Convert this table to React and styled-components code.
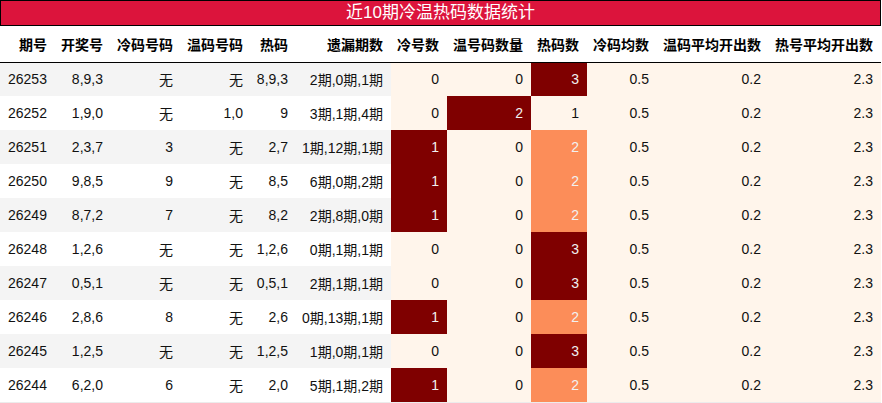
import React from "react";
import styled, { createGlobalStyle } from "styled-components";

const Global = createGlobalStyle`
  html, body { margin: 0; padding: 0; background: #ffffff; }
  body { font-family: "Liberation Sans", "Noto Sans CJK SC", sans-serif; }
`;

const Wrap = styled.div`
  width: 881px;
`;

const Title = styled.div`
  height: 24px;
  border: 1px solid #000;
  background: #dc143c;
  color: #fff;
  font-size: 17px;
  line-height: 24px;
  text-align: center;
`;

const Table = styled.table`
  width: 881px;
  border-collapse: collapse;
  table-layout: fixed;
  font-size: 14px;
  color: #111;
  border-bottom: 1px solid #ececec;
`;

const HeadRow = styled.tr`
  height: 36px;
  border-bottom: 1px solid #000;
`;

const HeadCell = styled.th`
  font-weight: bold;
  text-align: right;
  padding: 0 8px 0 0;
  white-space: nowrap;
  color: #000;
`;

const Row = styled.tr`
  height: 34px;
`;

const Cell = styled.td`
  text-align: right;
  padding: 0 8px 0 0;
  white-space: nowrap;
  background: ${(p) => p.$bg};
  color: ${(p) => p.$fg};
  &:first-child { text-align: left; padding-left: 8px; }
`;

const cols = [
  { name: "期号", w: 55 },
  { name: "开奖号", w: 56 },
  { name: "冷码号码", w: 70 },
  { name: "温码号码", w: 70 },
  { name: "热码", w: 45 },
  { name: "遗漏期数", w: 95 },
  { name: "冷号数", w: 56 },
  { name: "温号码数量", w: 84 },
  { name: "热码数", w: 56 },
  { name: "冷码均数", w: 70 },
  { name: "温码平均开出数", w: 112 },
  { name: "热号平均开出数", w: 112 },
];

const rows = [
  ["26253", "8,9,3", "无", "无", "8,9,3", "2期,0期,1期", 0, 0, 3],
  ["26252", "1,9,0", "无", "1,0", "9", "3期,1期,4期", 0, 2, 1],
  ["26251", "2,3,7", "3", "无", "2,7", "1期,12期,1期", 1, 0, 2],
  ["26250", "9,8,5", "9", "无", "8,5", "6期,0期,2期", 1, 0, 2],
  ["26249", "8,7,2", "7", "无", "8,2", "2期,8期,0期", 1, 0, 2],
  ["26248", "1,2,6", "无", "无", "1,2,6", "0期,1期,1期", 0, 0, 3],
  ["26247", "0,5,1", "无", "无", "0,5,1", "2期,1期,1期", 0, 0, 3],
  ["26246", "2,8,6", "8", "无", "2,6", "0期,13期,1期", 1, 0, 2],
  ["26245", "1,2,5", "无", "无", "1,2,5", "1期,0期,1期", 0, 0, 3],
  ["26244", "6,2,0", "6", "无", "2,0", "5期,1期,2期", 1, 0, 2],
].map((r) => [...r, "0.5", "0.2", "2.3"]);

const CREAM = "#fff5eb";
const heat = (v, min, max) => {
  if (max === min) return { bg: CREAM, fg: "#111" };
  const t = (v - min) / (max - min);
  if (t < 0.25) return { bg: CREAM, fg: "#111" };
  if (t < 0.75) return { bg: "#fc8d59", fg: "#f1f1f1" };
  return { bg: "#7f0000", fg: "#f1f1f1" };
};

const ranges = [6, 7, 8].map((i) => {
  const vals = rows.map((r) => r[i]);
  return [Math.min(...vals), Math.max(...vals)];
});

export default function App() {
  return (
    <Wrap>
      <Global />
      <Title>近10期冷温热码数据统计</Title>
      <Table>
        <colgroup>
          {cols.map((c) => (
            <col key={c.name} style={{ width: c.w }} />
          ))}
        </colgroup>
        <thead>
          <HeadRow>
            {cols.map((c) => (
              <HeadCell key={c.name}>{c.name}</HeadCell>
            ))}
          </HeadRow>
        </thead>
        <tbody>
          {rows.map((r, ri) => (
            <Row key={r[0]}>
              {r.map((v, ci) => {
                let bg, fg = "#111";
                if (ci < 6) bg = ri % 2 === 0 ? "#f4f4f4" : "#ffffff";
                else if (ci < 9) {
                  const h = heat(v, ranges[ci - 6][0], ranges[ci - 6][1]);
                  bg = h.bg;
                  fg = h.fg;
                } else bg = CREAM;
                return (
                  <Cell key={ci} $bg={bg} $fg={fg}>
                    {v}
                  </Cell>
                );
              })}
            </Row>
          ))}
        </tbody>
      </Table>
    </Wrap>
  );
}
